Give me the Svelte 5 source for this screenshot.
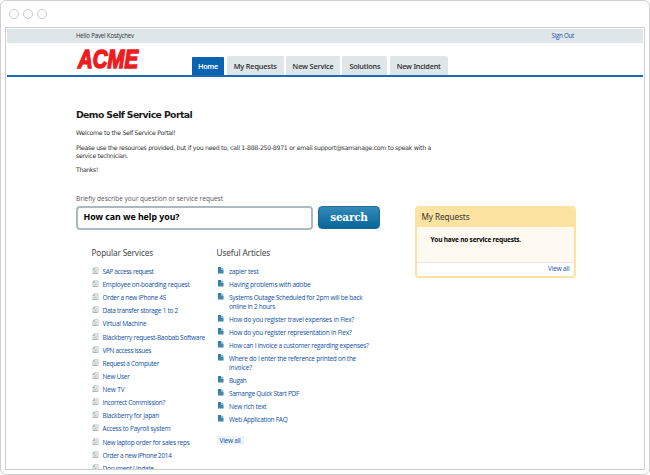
<script>
  const tabs = [
    { label: 'Home', box: 32, text: 20, active: true },
    { label: 'My Requests', box: 57, text: 43 },
    { label: 'New Service', box: 54, text: 41 },
    { label: 'Solutions', box: 45, text: 31 },
    { label: 'New Incident', box: 58, text: 44 }
  ];

  const services = [
    ['SAP access request', 51],
    ['Employee on-boarding request', 87],
    ['Order a new iPhone 4S', 63.5],
    ['Data transfer storage 1 to 2', 75.5],
    ['Virtual Machine', 44],
    ['Blackberry request-Baobab Software', 102.5],
    ['VPN access issues', 48.5],
    ['Request a Computer', 56.5],
    ['New User', 27],
    ['New TV', 22],
    ['Incorrect Commission?', 62.5],
    ['Blackberry for Japan', 56.5],
    ['Access to Payroll system', 68],
    ['New laptop order for sales reps', 87],
    ['Order a new iPhone 2014', 69],
    ['Document Update', 51]
  ];

  const articles = [
    [['zapier test', 29.5]],
    [['Having problems with adobe', 81.5]],
    [['Systems Outage Scheduled for 2pm will be back', 133.5], ['online in 2 hours', 46]],
    [['How do you register travel expenses in Flex?', 125]],
    [['How do you register representation in Flex?', 122.5]],
    [['How can I invoice a customer regarding expenses?', 139.5]],
    [['Where do I enter the reference printed on the', 127], ['invoice?', 23]],
    [['Bugah', 17.5]],
    [['Samange Quick Start PDF', 70]],
    [['New rich text', 37.5]],
    [['Web Application FAQ', 58.5]]
  ];

  // Tracks a line of text so that it spans the given width.
  function fit(node, width) {
    const natural = node.getBoundingClientRect().width;
    const count = node.textContent.length;
    node.style.letterSpacing = `${(width - natural) / count}px`;
  }
</script>

{#snippet line(text, width)}
  <span class="line" use:fit={width}>{text}</span>
{/snippet}

<div class="window">
  <div class="chrome"><i></i><i></i><i></i></div>
  <div class="page">
    <div class="topbar">
      <span>{@render line('Hello Pavel Kostychev', 58)}</span>
      <a href="#out">{@render line('Sign Out', 22.5)}</a>
    </div>
    <header>
      <svg class="logo" width="66" height="28" viewBox="0 0 66 28">
        <text x="2" y="22.3" textLength="60" lengthAdjust="spacingAndGlyphs">ACME</text>
      </svg>
      <nav>
        {#each tabs as tab}
          <a href="#tab" class:active={tab.active} style="width:{tab.box}px">{@render line(tab.label, tab.text)}</a>
        {/each}
      </nav>
    </header>
    <main>
      <h1>{@render line('Demo Self Service Portal', 116)}</h1>
      <div class="intro">
        <p>{@render line('Welcome to the Self Service Portal!', 99.5)}</p>
        <p>
          {@render line('Please use the resources provided, but if you need to, call 1-888-250-8971 or email support@samanage.com to speak with a', 355)}
          {@render line('service technician.', 52)}
        </p>
        <p>{@render line('Thanks!', 22)}</p>
      </div>
      <div class="columns">
        <section class="left">
          <div class="hint">{@render line('Briefly describe your question or service request', 147)}</div>
          <div class="search">
            <div class="field">{@render line('How can we help you?', 96)}</div>
            <button>{@render line('search', 37.5)}</button>
          </div>
          <div class="lists">
            <div class="services">
              <h2>{@render line('Popular Services', 61.5)}</h2>
              {#each services as [name, width]}
                <div class="service">
                  <svg width="7" height="8" viewBox="0 0 7 8">
                    <path d="M2.2 .4H6.2V6.5H.8V3Z" fill="#e4e9ea" stroke="#b9c4c7" stroke-width=".6" />
                    <path d="M2.6.3V3H.4Z" fill="#9babaf" />
                    <path d="M.6 6.3H5.4" stroke="#94a5a9" stroke-width=".8" />
                    <path d="M4 2.5V4.6H2" fill="none" stroke="#b4c0c3" stroke-width=".8" />
                  </svg>
                  <a href="#service">{@render line(name, width)}</a>
                </div>
              {/each}
            </div>
            <div class="articles">
              <h2>{@render line('Useful Articles', 53.5)}</h2>
              {#each articles as lines}
                <div class="article">
                  <svg width="6" height="7" viewBox="0 0 6 7">
                    <path d="M0 0H3V2.5H5.5V6.5H0Z" fill="#347fa4" />
                    <path d="M3.5 .2 5.3 2H3.5Z" fill="#347fa4" />
                    <path d="M1.2 3.9H4.5M1.2 5.2H4.5" stroke="#6fa6bf" stroke-width=".4" />
                  </svg>
                  <a href="#article">{#each lines as [text, width]}{@render line(text, width)}{/each}</a>
                </div>
              {/each}
              <a class="more" href="#all">{@render line('View all', 21)}</a>
            </div>
          </div>
        </section>
        <aside>
          <h3>{@render line('My Requests', 48)}</h3>
          <div class="empty">{@render line('You have no service requests.', 90.5)}</div>
          <div class="foot"><a href="#all">{@render line('View all', 21.5)}</a></div>
        </aside>
      </div>
    </main>
  </div>
</div>

<style>
  :global(body) { background: #fff; }
  .window {
    box-sizing: border-box;
    width: 650px;
    height: 475px;
    padding: 0 4px;
    border: 1px solid #d0d0d0;
    border-radius: 6px;
    overflow: hidden;
    font: 6.5px/9px "Open Sans", "Noto Sans", sans-serif;
    color: #333;
  }
  .chrome { display: flex; gap: 4px; height: 26px; padding: 8px 0 0 4px; box-sizing: border-box; }
  .chrome i { box-sizing: border-box; width: 10px; height: 10px; border: 1px solid #c9c9c9; border-radius: 50%; }
  .page {
    box-sizing: border-box;
    width: 640px;
    height: 443px;
    padding: 1px;
    border: 1px solid #d0d0d0;
    overflow: hidden;
  }
  .line { display: block; width: max-content; white-space: pre; }
  a { color: #0f50a4; text-decoration: none; }
  .topbar {
    display: flex;
    justify-content: space-between;
    align-items: center;
    box-sizing: border-box;
    height: 14px;
    padding: 0 69px 1px 69px;
    background: #dee6ea;
    font-size: 6.2px;
  }
  header {
    display: flex;
    box-sizing: border-box;
    height: 34px;
    padding-left: 69px;
    border-bottom: 2px solid #1b6cb8;
  }
  .logo { flex: none; margin: 3px 50.5px 0 -.5px; overflow: visible; }
  .logo text {
    font: italic 700 26px "Liberation Sans", sans-serif;
    fill: #ed1c1f;
    stroke: #ed1c1f;
    stroke-width: 1.6px;
  }
  nav { display: flex; align-items: flex-end; gap: 2.3px; }
  nav a {
    display: flex;
    justify-content: center;
    align-items: center;
    height: 19px;
    border-radius: 2px 2px 0 0;
    background: #dee6ea;
    color: #222;
    font: 500 7.3px/10px "Noto Sans", sans-serif;
  }
  nav a.active { height: 18px; margin-right: .5px; background: #0864b1; color: #fff; font-weight: 600; border-radius: 1px 1px 0 0; }
  main { padding: 31px 0 0 69px; }
  h1, h2, h3, p { margin: 0; }
  h1 { font: 700 9.3px/14px "DejaVu Sans", sans-serif; color: #1a1a1a; }
  .intro { display: flex; flex-direction: column; gap: 6.7px; padding-top: 7px; font: 6.2px/8px "DejaVu Sans", sans-serif; color: #333; }
  .columns { display: flex; align-items: flex-start; padding-top: 20px; }
  .left { width: 338.5px; flex: none; }
  .hint { height: 11.6px; color: #555; }
  .search { display: flex; gap: 5px; }
  .field {
    display: flex;
    align-items: center;
    box-sizing: border-box;
    width: 237px;
    height: 24px;
    padding: 0 0 1px 5.5px;
    border: 2px solid #abbac0;
    border-radius: 4px;
    font: 700 8.8px/12px "Noto Sans", sans-serif;
    color: #000;
  }
  button {
    display: flex;
    justify-content: center;
    box-sizing: border-box;
    width: 62px;
    height: 23px;
    padding: 3px 0 0;
    border: 1px solid #1f6a96;
    border-radius: 4px;
    background: linear-gradient(#348bb8, #04659a);
    color: #fff;
    font: 700 10.5px/14px "DejaVu Serif", serif;
  }
  .lists { display: flex; padding: 17px 0 0 15.5px; }
  h2 { height: 20px; font: 8.2px/12px "Noto Sans", sans-serif; color: #444; }
  .services { width: 125px; }
  .service { display: flex; gap: 4px; height: 13.13px; }
  .service svg { flex: none; }
  .article { display: flex; gap: 6px; padding-bottom: 4px; }
  .article svg { flex: none; margin: 0 0 0 1.5px; }
  .article a { margin-left: -1px; }
  .more { display: block; width: max-content; margin-top: 8.5px; padding: 0 3px; background: #edf3f7; }
  aside {
    box-sizing: border-box;
    width: 161px;
    height: 72px;
    margin-top: 11.6px;
    border: 2px solid #fce3a1;
    border-radius: 4px;
    overflow: hidden;
    background: #fff;
  }
  h3 { height: 19px; padding-left: 5px; background: #fce3a1; font: 8.2px/17px "Noto Sans", sans-serif; color: #333; }
  .empty { height: 36px; padding: 8px 0 0 14px; box-sizing: border-box; background: #fefaf1; border-bottom: 1px solid #ece6e2; font-weight: 700; color: #000; }
  .foot { display: flex; justify-content: flex-end; padding: 1.5px 4px 0 0; }
</style>
